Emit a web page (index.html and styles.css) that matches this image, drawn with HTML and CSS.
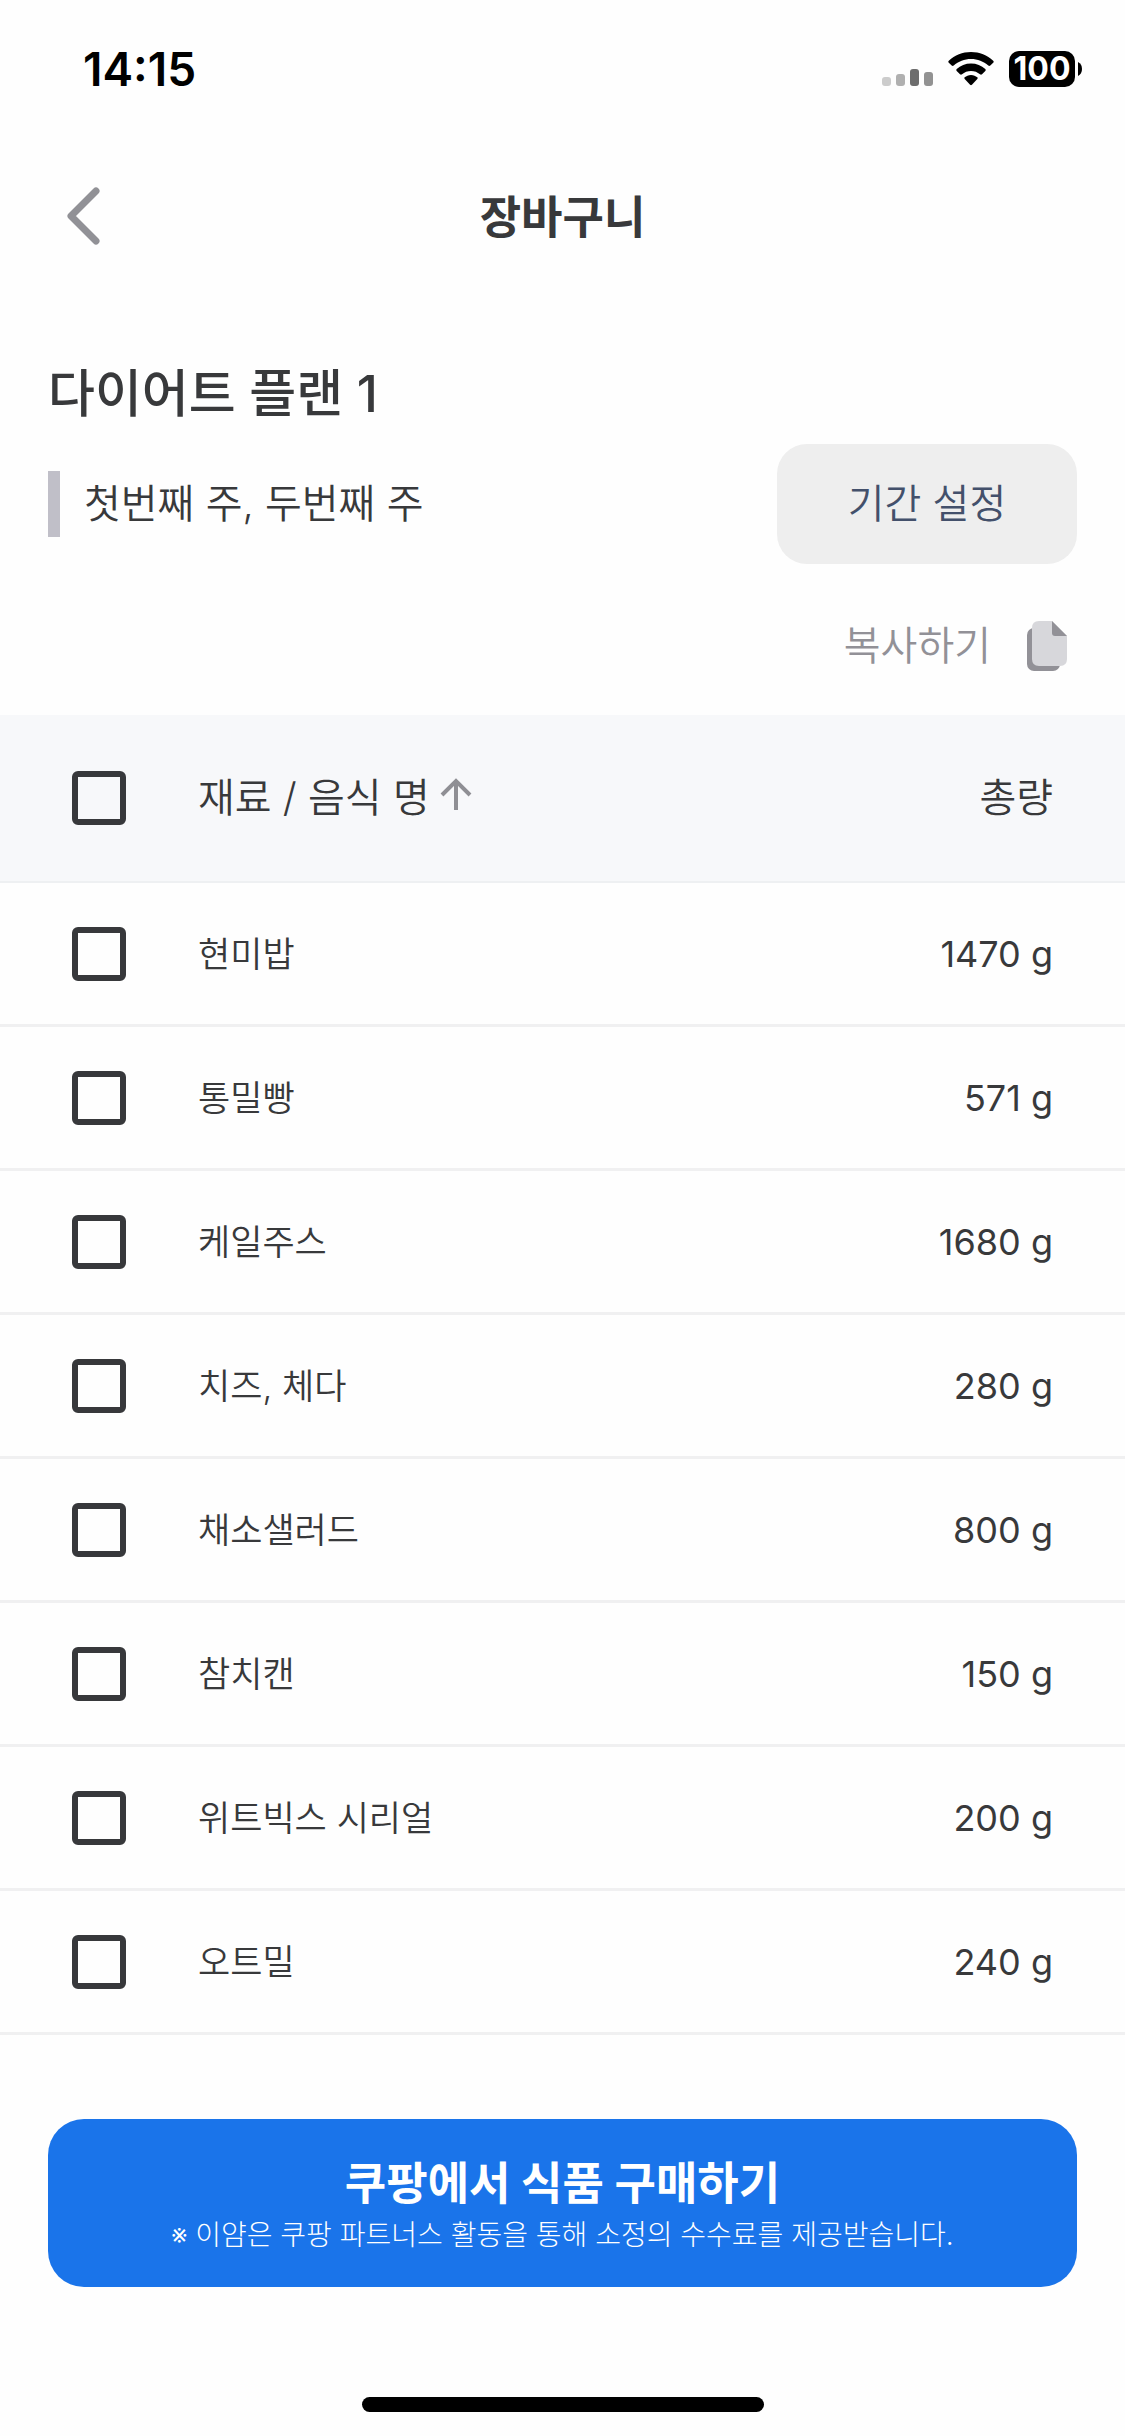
FILE: index.html
```html
<!DOCTYPE html>
<html lang="ko">
<head>
<meta charset="utf-8">
<meta name="viewport" content="width=device-width, initial-scale=1">
<title>장바구니</title>
<link rel="stylesheet" href="styles.css">
</head>
<body>
<div class="screen">
  <div class="status-bar">
    <span class="status-time">14:15</span>
    <div class="status-icons">
      <svg class="icon-signal" viewBox="0 0 51 34" aria-hidden="true">
        <rect x="0" y="25" width="9" height="9" rx="3" fill="#cccccc"/>
        <rect x="14" y="22" width="9" height="12" rx="3" fill="#b0b0b0"/>
        <rect x="28" y="17" width="9" height="17" rx="3" fill="#6d6d6d"/>
        <rect x="42" y="20" width="9" height="14" rx="3" fill="#929292"/>
      </svg>
      <svg class="icon-wifi" viewBox="0 0 46 34" aria-hidden="true">
        <path d="M23 0C31.500 0 39.300 3.200 45.200 8.700Q46.200 9.700 45.200 10.700L42.300 13.600Q41.300 14.500 40.300 13.600C35.600 9.400 29.600 7 23 7S10.400 9.400 5.700 13.600Q4.700 14.500 3.700 13.600L.8 10.700Q-.2 9.700 .8 8.700C6.700 3.200 14.500 0 23 0Z"/>
        <path d="M23 11.500C28.500 11.500 33.500 13.500 37.300 17Q38.300 18 37.300 19L34 22.300Q33 23.200 32 22.300C29.500 20.200 26.400 19 23 19S16.500 20.200 14 22.300Q13 23.200 12 22.300L8.700 19Q7.700 18 8.700 17C12.500 13.500 17.500 11.500 23 11.500Z"/>
        <path d="M23 23C25.700 23 27.500 24 29.300 25.300Q30.200 26.100 29.300 27.100L23.900 32.700Q23 33.600 22.100 32.700L16.700 27.100Q15.800 26.100 16.700 25.300C18.500 24 20.300 23 23 23Z"/>
      </svg>
      <div class="battery">
        <span class="battery-level">100</span>
        <svg class="battery-cap" viewBox="0 0 4 14" aria-hidden="true"><path d="M0 0Q4 2 4 7T0 14Z"/></svg>
      </div>
    </div>
  </div>

  <header class="nav">
    <button class="back" type="button" aria-label="뒤로">
      <svg viewBox="0 0 33 58" aria-hidden="true"><path d="M29 4 4 29 29 54"/></svg>
    </button>
    <h1 class="nav-title">장바구니</h1>
  </header>

  <main>
    <section class="plan">
      <h2 class="plan-title">다이어트 플랜 1</h2>
      <div class="plan-row">
        <p class="plan-weeks">첫번째 주, 두번째 주</p>
        <button class="period" type="button">기간 설정</button>
      </div>
      <button class="copy" type="button">
        <span>복사하기</span>
        <svg viewBox="0 0 40 50" aria-hidden="true">
          <rect x="0" y="7" width="33" height="43" rx="7" fill="#929197"/>
          <path d="M12 0H25L40 15V38Q40 45 33 45H12Q5 45 5 38V7Q5 0 12 0Z" fill="#d7d7db"/>
          <path d="M25 0 40 15H28Q25 15 25 12Z" fill="#929197"/>
        </svg>
      </button>
    </section>

    <table class="items">
      <thead>
        <tr>
          <th class="col-check"><input type="checkbox" aria-label="전체 선택"></th>
          <th class="col-name">
            <button class="sort" type="button">재료 / 음식 명<svg viewBox="0 0 32 40" aria-hidden="true"><path d="M16 32V3M2 17 16 3 30 17"/></svg></button>
          </th>
          <th class="col-amount">총량</th>
        </tr>
      </thead>
      <tbody>
        <tr><td class="col-check"><input type="checkbox" id="i1"></td><td class="col-name"><label for="i1">현미밥</label></td><td class="col-amount">1470 g</td></tr>
        <tr><td class="col-check"><input type="checkbox" id="i2"></td><td class="col-name"><label for="i2">통밀빵</label></td><td class="col-amount">571 g</td></tr>
        <tr><td class="col-check"><input type="checkbox" id="i3"></td><td class="col-name"><label for="i3">케일주스</label></td><td class="col-amount">1680 g</td></tr>
        <tr><td class="col-check"><input type="checkbox" id="i4"></td><td class="col-name"><label for="i4">치즈, 체다</label></td><td class="col-amount">280 g</td></tr>
        <tr><td class="col-check"><input type="checkbox" id="i5"></td><td class="col-name"><label for="i5">채소샐러드</label></td><td class="col-amount">800 g</td></tr>
        <tr><td class="col-check"><input type="checkbox" id="i6"></td><td class="col-name"><label for="i6">참치캔</label></td><td class="col-amount">150 g</td></tr>
        <tr><td class="col-check"><input type="checkbox" id="i7"></td><td class="col-name"><label for="i7">위트빅스 시리얼</label></td><td class="col-amount">200 g</td></tr>
        <tr><td class="col-check"><input type="checkbox" id="i8"></td><td class="col-name"><label for="i8">오트밀</label></td><td class="col-amount">240 g</td></tr>
      </tbody>
    </table>
  </main>

  <footer class="footer">
    <button class="buy" type="button">
      <span class="buy-title">쿠팡에서 식품 구매하기</span>
      <span class="buy-note">※ 이얌은 쿠팡 파트너스 활동을 통해 소정의 수수료를 제공받습니다.</span>
    </button>
    <div class="home-indicator"></div>
  </footer>
</div>
</body>
</html>
```
FILE: styles.css
```css
* {
  box-sizing: border-box;
}

body {
  margin: 0;
  background: #fefefe;
  color: #38393b;
  font-family: Inter, "Noto Sans CJK KR", sans-serif;
  font-size: 35px;
  font-weight: 350;
  line-height: 48px;
}

h1,
h2,
p {
  margin: 0;
}

button {
  border: 0;
  padding: 0;
  background: none;
  color: inherit;
  font: inherit;
  cursor: pointer;
}

svg {
  display: block;
  flex: none;
}

.screen {
  display: flex;
  flex-direction: column;
  min-height: 100vh;
}

/* Status bar */
.status-bar {
  display: flex;
  align-items: center;
  justify-content: space-between;
  height: 138px;
  padding: 0 43px 0 83px;
  color: #000;
}

.status-time {
  font-size: 46px;
  font-weight: 600;
}

.status-icons {
  display: flex;
  align-items: center;
  gap: 15px;
}

.icon-signal {
  width: 51px;
  height: 34px;
}

.icon-wifi {
  width: 46px;
  height: 34px;
}

.battery {
  display: flex;
  align-items: center;
  gap: 3px;
}

.battery-level {
  width: 66px;
  border-radius: 10px;
  background: #000;
  color: #fff;
  font-size: 32px;
  font-weight: 700;
  line-height: 36px;
  text-align: center;
}

.battery-cap {
  width: 4px;
  height: 14px;
}

/* Navigation header */
.nav {
  display: grid;
  grid-template-columns: 1fr auto 1fr;
  align-items: center;
  height: 156px;
  padding: 0 67px;
}

.back {
  justify-self: start;
}

.back svg {
  width: 33px;
  height: 58px;
  fill: none;
  stroke: #919196;
  stroke-width: 7;
  stroke-linecap: round;
  stroke-linejoin: round;
}

.nav-title {
  padding-top: 4px;
  font-size: 45px;
  font-weight: 700;
}

/* Plan summary */
.plan {
  display: flex;
  flex-direction: column;
  padding: 64px 48px 35px;
}

.plan-title {
  font-size: 51px;
  font-weight: 500;
  line-height: 72px;
}

.plan-row {
  display: flex;
  align-items: center;
  justify-content: space-between;
  margin-top: 14px;
}

.plan-weeks {
  border-left: 12px solid #c0bfc8;
  padding-left: 24px;
  font-size: 40px;
  line-height: 66px;
}

.period {
  width: 300px;
  height: 120px;
  border-radius: 30px;
  background: #eee;
  color: #43506b;
  font-size: 40px;
}

.copy {
  display: flex;
  align-items: center;
  align-self: flex-end;
  gap: 36px;
  margin-top: 48px;
  padding: 9px 10px;
  color: #929197;
  font-size: 40px;
}

.copy svg {
  width: 40px;
  height: 50px;
}

/* Item table */
.items {
  width: 100%;
  border-spacing: 0;
}

.items th {
  height: 168px;
  border-bottom: 2px solid #eef0f2;
  background: #f7f8fa;
  font-size: 40px;
  font-weight: 350;
}

.items td {
  height: 144px;
  border-bottom: 3px solid #f0f0f1;
}

.items th,
.items td {
  padding: 0;
  vertical-align: middle;
}

.items .col-check {
  width: 198px;
  padding-left: 72px;
  text-align: left;
}

.items .col-name {
  text-align: left;
}

.items .col-amount {
  padding-right: 72px;
  text-align: right;
}

.items td.col-amount {
  font-size: 36px;
  font-weight: 400;
}

input[type="checkbox"] {
  display: block;
  width: 54px;
  height: 54px;
  margin: 0;
  border: 6px solid #37383b;
  border-radius: 6px;
  appearance: none;
}

input[type="checkbox"]:checked {
  background: #37383b;
}

.sort {
  display: flex;
  align-items: center;
  gap: 10px;
}

.sort svg {
  width: 32px;
  height: 40px;
  fill: none;
  stroke: #8f8f94;
  stroke-width: 4;
}

/* Purchase button */
.footer {
  display: flex;
  flex: 1;
  flex-direction: column;
  justify-content: space-between;
  padding: 84px 48px 24px;
}

.buy {
  display: flex;
  flex-direction: column;
  align-items: center;
  justify-content: center;
  height: 168px;
  padding-top: 4px;
  border-radius: 36px;
  background: #1a74ea;
  color: #fff;
}

.buy-title {
  font-size: 45px;
  font-weight: 700;
  line-height: 60px;
}

.buy-note {
  font-size: 28px;
  font-weight: 300;
  line-height: 42px;
}

.home-indicator {
  align-self: center;
  width: 402px;
  height: 15px;
  border-radius: 8px;
  background: #000;
}
```
